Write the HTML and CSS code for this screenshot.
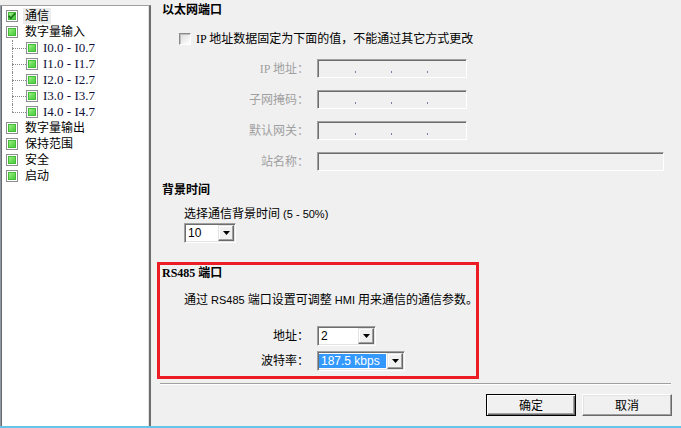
FILE: index.html
```html
<!DOCTYPE html>
<html>
<head>
  <title>通信设置</title>
  <link rel="stylesheet" href="styles.css">
</head>
<body>
  <div class="window">
    <div class="tree">
      <div class="node">
        <span class="box"><svg width="10" height="10" viewBox="0 0 10 10"><path d="M1.5 4.8 L3.8 7.2 L8.3 2.2" fill="none" stroke="#1d6e1d" stroke-width="1.7"/></svg></span>
        <span class="label current">通信</span>
      </div>
      <div class="node">
        <span class="box"></span>
        <span class="label">数字量输入</span>
      </div>
      <div class="children">
        <div class="node child"><span class="box"></span><span class="label io">I0.0 - I0.7</span></div>
        <div class="node child"><span class="box"></span><span class="label io">I1.0 - I1.7</span></div>
        <div class="node child"><span class="box"></span><span class="label io">I2.0 - I2.7</span></div>
        <div class="node child"><span class="box"></span><span class="label io">I3.0 - I3.7</span></div>
        <div class="node child"><span class="box"></span><span class="label io">I4.0 - I4.7</span></div>
      </div>
      <div class="node"><span class="box"></span><span class="label">数字量输出</span></div>
      <div class="node"><span class="box"></span><span class="label">保持范围</span></div>
      <div class="node"><span class="box"></span><span class="label">安全</span></div>
      <div class="node"><span class="box"></span><span class="label">启动</span></div>
    </div>

    <div class="main">
      <h2 class="section">以太网端口</h2>
      <div class="fixed-ip">
        <span class="check"></span>
        <span class="serif">IP 地址数据固定为下面的值，不能通过其它方式更改</span>
      </div>
      <div class="fields">
        <span class="field-label">IP 地址：</span>
        <div class="edit ip"><i></i><i></i><i></i></div>
        <span class="field-label">子网掩码：</span>
        <div class="edit ip"><i></i><i></i><i></i></div>
        <span class="field-label">默认网关：</span>
        <div class="edit ip"><i></i><i></i><i></i></div>
        <span class="field-label">站名称：</span>
        <div class="edit name"></div>
      </div>

      <h2 class="section second">背景时间</h2>
      <p class="hint">选择通信背景时间<span class="lat"> (5 - 50%)</span></p>
      <div class="combo time">
        <span class="value">10</span>
        <span class="arrow"><svg width="7" height="4" viewBox="0 0 7 4"><path d="M0 0 H7 L3.5 4 Z" fill="#000"/></svg></span>
      </div>

      <div class="rs485">
        <h2 class="section serif">RS485 端口</h2>
        <p class="desc">通过<span class="lat"> RS485 </span>端口设置可调整<span class="lat"> HMI </span>用来通信的通信参数。</p>
        <div class="rs-fields">
          <span class="field-label dark">地址：</span>
          <div class="combo addr">
            <span class="value">2</span>
            <span class="arrow"><svg width="7" height="4" viewBox="0 0 7 4"><path d="M0 0 H7 L3.5 4 Z" fill="#000"/></svg></span>
          </div>
          <span class="field-label dark">波特率：</span>
          <div class="combo baud">
            <span class="value selected">187.5 kbps</span>
            <span class="arrow"><svg width="7" height="4" viewBox="0 0 7 4"><path d="M0 0 H7 L3.5 4 Z" fill="#000"/></svg></span>
          </div>
        </div>
      </div>

      <div class="separator"></div>
      <div class="buttons">
        <button class="btn default">确定</button>
        <button class="btn">取消</button>
      </div>
    </div>
  </div>
</body>
</html>
```

FILE: styles.css
```css
* {
  box-sizing: border-box;
}
body {
  margin: 0;
  background: #f0f0f0;
  color: #000;
  font: 12px/16px "Liberation Sans", "Noto Sans CJK SC", sans-serif;
}
.serif {
  font-family: "Liberation Serif", "Noto Sans CJK SC", serif;
}
.lat {
  font-size: 11px;
}
.window {
  display: flex;
  height: 428px;
  border-bottom: 2px solid #66c4e6;
}

/* tree on the left */
.tree {
  width: 151px;
  margin-top: 5px;
  padding-top: 2px;
  background: #fff;
  border-top: 1px solid #a0a0a0;
  border-left: 1px solid #8d99a6;
  border-right: 2px solid #6d6d6d;
  box-shadow: inset 1px 0 #696969, inset -1px 0 #e3e3e3;
}
.node {
  position: relative;
  display: flex;
  align-items: center;
  height: 16px;
  padding-left: 5px;
}
.node.child {
  padding-left: 25px;
}
.node.child::before {
  content: "";
  position: absolute;
  left: 11px;
  top: 0;
  bottom: 0;
  border-left: 1px dotted #8a8a8a;
}
.node.child:last-child::before {
  bottom: 8px;
}
.node.child::after {
  content: "";
  position: absolute;
  left: 11px;
  top: 8px;
  width: 14px;
  border-top: 1px dotted #8a8a8a;
}
.box {
  flex: none;
  display: flex;
  align-items: center;
  justify-content: center;
  width: 12px;
  height: 12px;
  border: 1px solid #8f8f8f;
  background: linear-gradient(135deg, #c4f5b1 0%, #6ddd58 50%, #33c233 100%);
  box-shadow: inset 0 0 0 1px #fff, inset 0 0 0 2px #45bb3c;
}
.label {
  margin-left: 5px;
  padding: 0 2px;
  white-space: nowrap;
}
.label.current {
  background: #ececec;
}
.label.io {
  margin-left: 3px;
  font-family: "Liberation Serif", serif;
  font-size: 13px;
  color: #10103a;
}

/* settings side */
.main {
  flex: 1;
  display: flex;
  flex-direction: column;
  padding: 2px 9px 0 11px;
}
.section {
  margin: 0;
  font-size: 12px;
  line-height: 16px;
  font-weight: bold;
}
.section.second {
  margin-top: 11px;
}
.fixed-ip {
  display: flex;
  align-items: center;
  gap: 5px;
  height: 16px;
  margin-top: 13px;
  padding-left: 17px;
}
.check {
  width: 12px;
  height: 12px;
  border: 1px solid;
  border-color: #8a8a8a #fff #fff #8a8a8a;
  background: linear-gradient(135deg, #dcdcdc, #fff);
  box-shadow: inset 1px 1px #bdbdbd;
}
.fields {
  display: grid;
  grid-template-columns: 147px auto;
  column-gap: 8px;
  row-gap: 12px;
  justify-items: start;
  align-items: center;
  margin-top: 12px;
}
.field-label {
  justify-self: stretch;
  text-align: right;
  color: #a0a0a0;
  font-family: "Liberation Serif", "Noto Sans CJK SC", serif;
  white-space: nowrap;
}
.field-label.dark {
  color: #000;
}
.edit {
  height: 19px;
  border: 1px solid;
  border-color: #a0a0a0 #fff #fff #a0a0a0;
  box-shadow: inset 1px 1px #6d6d6d;
  background: #f0f0f0;
}
.edit.ip {
  width: 150px;
  display: flex;
  align-items: flex-end;
  gap: 35px;
  padding: 0 0 4px 37px;
}
.edit.ip i {
  width: 1px;
  height: 2px;
  background: #7c7ca6;
}
.edit.name {
  width: 347px;
}
.hint {
  margin: 8px 0 0 22px;
}
.combo {
  display: flex;
  align-items: stretch;
  height: 20px;
  padding: 1px;
  border: 1px solid;
  border-color: #a0a0a0 #fff #fff #a0a0a0;
  box-shadow: inset 1px 1px #6d6d6d, inset -1px -1px #e3e3e3;
  background: #fff;
}
.combo.time {
  width: 52px;
  margin: 1px 0 0 22px;
}
.combo.addr {
  width: 59px;
}
.combo.baud {
  width: 88px;
}
.value {
  flex: 1;
  padding-left: 2px;
  line-height: 16px;
}
.value.selected {
  margin: 1px 1px 1px 0;
  background: #3399ff;
  color: #fff;
  line-height: 14px;
}
.arrow {
  flex: none;
  display: flex;
  align-items: center;
  justify-content: center;
  width: 16px;
  border: 1px solid;
  border-color: #e3e3e3 #696969 #696969 #e3e3e3;
  box-shadow: inset -1px -1px #a0a0a0, inset 1px 1px #fff;
  background: #f0f0f0;
}

/* RS485 block, marked with a red frame */
.rs485 {
  width: 322px;
  margin: 19px 0 0 -5px;
  padding: 0 0 5px 2px;
  border: 3px solid #ec1c24;
}
.desc {
  margin: 11px 0 0 22px;
  white-space: nowrap;
}
.rs-fields {
  display: grid;
  grid-template-columns: 147px auto;
  column-gap: 8px;
  row-gap: 5px;
  justify-items: start;
  align-items: center;
  margin-top: 18px;
}
.separator {
  height: 2px;
  margin: 4px 1px 0 -2px;
  border-top: 1px solid #a0a0a0;
  border-bottom: 1px solid #fff;
}
.buttons {
  display: flex;
  justify-content: flex-end;
  gap: 6px;
  margin-top: 9px;
}
.btn {
  width: 90px;
  height: 22px;
  padding: 0;
  font: 12px/16px "Noto Sans CJK SC", sans-serif;
  color: #000;
  background: #f0f0f0;
  border: 1px solid;
  border-color: #fff #696969 #696969 #fff;
  box-shadow: inset -1px -1px #a0a0a0, inset 1px 1px #e3e3e3;
}
.btn.default {
  border-color: #000;
  box-shadow: inset 1px 1px #fff, inset -1px -1px #696969, inset -2px -2px #a0a0a0;
}
```
